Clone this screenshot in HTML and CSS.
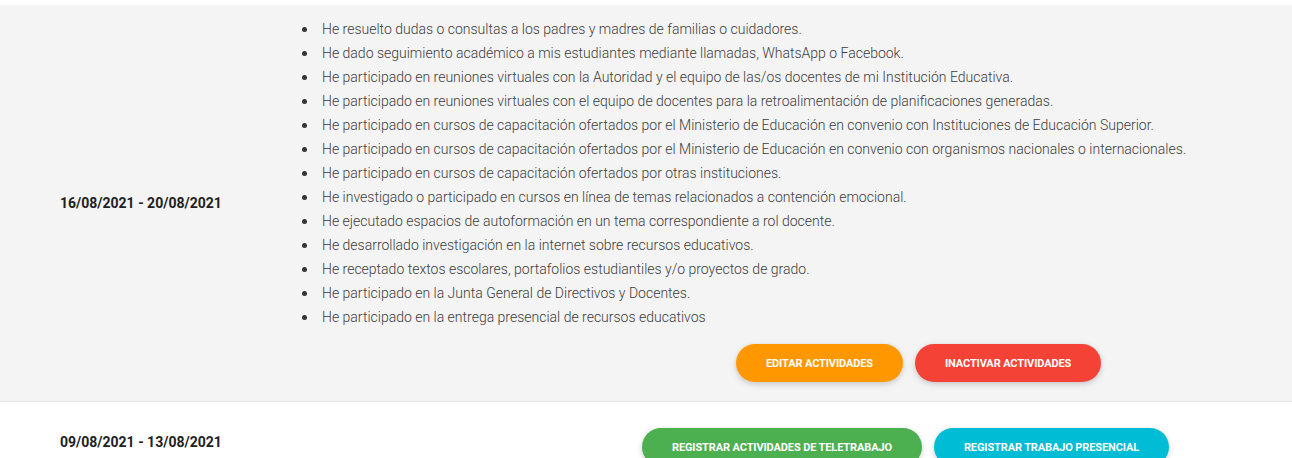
FILE: index.html
```html
<!DOCTYPE html>
<html lang="es">
<head>
<meta charset="utf-8">
<title>Actividades</title>
<link rel="stylesheet" href="styles.css">
</head>
<body>
<div class="table">
  <div class="row row--shaded">
    <div class="cell-date">16/08/2021 - 20/08/2021</div>
    <div class="cell-activities">
      <ul class="activity-list">
        <li>He resuelto dudas o consultas a los padres y madres de familias o cuidadores.</li>
        <li>He dado seguimiento académico a mis estudiantes mediante llamadas, WhatsApp o Facebook.</li>
        <li>He participado en reuniones virtuales con la Autoridad y el equipo de las/os docentes de mi Institución Educativa.</li>
        <li>He participado en reuniones virtuales con el equipo de docentes para la retroalimentación de planificaciones generadas.</li>
        <li>He participado en cursos de capacitación ofertados por el Ministerio de Educación en convenio con Instituciones de Educación Superior.</li>
        <li>He participado en cursos de capacitación ofertados por el Ministerio de Educación en convenio con organismos nacionales o internacionales.</li>
        <li>He participado en cursos de capacitación ofertados por otras instituciones.</li>
        <li>He investigado o participado en cursos en línea de temas relacionados a contención emocional.</li>
        <li>He ejecutado espacios de autoformación en un tema correspondiente a rol docente.</li>
        <li>He desarrollado investigación en la internet sobre recursos educativos.</li>
        <li>He receptado textos escolares, portafolios estudiantiles y/o proyectos de grado.</li>
        <li>He participado en la Junta General de Directivos y Docentes.</li>
        <li>He participado en la entrega presencial de recursos educativos</li>
      </ul>
      <div class="actions actions--edit">
        <button class="btn btn--orange">Editar actividades</button>
        <button class="btn btn--red">Inactivar actividades</button>
      </div>
    </div>
  </div>
  <div class="row row--plain">
    <div class="cell-date cell-date--top">09/08/2021 - 13/08/2021</div>
    <div class="cell-activities">
      <div class="actions actions--register">
        <button class="btn btn--green">Registrar actividades de teletrabajo</button>
        <button class="btn btn--cyan">Registrar trabajo presencial</button>
      </div>
    </div>
  </div>
</div>
</body>
</html>
```

FILE: styles.css
```css
html, body {
  margin: 0;
  padding: 0;
  background: #ffffff;
  font-family: Roboto, "Liberation Sans", Arial, sans-serif;
}

.table {
  padding-top: 5px;
}

.row {
  display: flex;
}

.row--shaded {
  background: #f4f4f4;
  border-bottom: 1px solid #e6e6e6;
  align-items: center;
}

.row--plain {
  align-items: flex-start;
}

.cell-date {
  flex: 0 0 230px;
  padding-left: 60px;
  font-size: 14px;
  font-weight: 700;
  color: #212121;
  line-height: 20px;
}

.cell-date--top {
  padding-top: 30px;
}

.cell-activities {
  flex: 1;
}

.row--shaded .cell-activities {
  padding: 12px 0 19px;
}

.activity-list {
  list-style: none;
  margin: 0;
  padding: 0 0 0 12px;
}

.activity-list li {
  font-size: 14px;
  font-weight: 300;
  color: #3c3c3c;
  line-height: 24px;
  display: flex;
  align-items: center;
}

.activity-list li::before {
  content: "";
  flex: 0 0 5px;
  width: 5px;
  height: 5px;
  border-radius: 50%;
  background: #333;
  margin-right: 15px;
  margin-top: 1px;
}

.actions {
  display: flex;
  gap: 12px;
}

.actions--edit {
  margin-top: 15px;
  padding-left: 446px;
}

.actions--register {
  margin-top: 26px;
  padding-left: 352px;
  padding-bottom: 27px;
}

.btn {
  height: 38px;
  padding: 0 30px;
  border: none;
  border-radius: 19px;
  color: #fff;
  font-family: Roboto, "Liberation Sans", Arial, sans-serif;
  font-size: 11px;
  font-weight: 700;
  text-transform: uppercase;
  letter-spacing: -0.12px;
  box-shadow: 0 2px 5px rgba(0, 0, 0, 0.12), 0 2px 8px rgba(0, 0, 0, 0.08);
  cursor: pointer;
}

.btn--orange { background: #ff9800; }
.btn--red { background: #f44336; }
.btn--green { background: #4caf50; }
.btn--cyan { background: #00bcd4; }
```
